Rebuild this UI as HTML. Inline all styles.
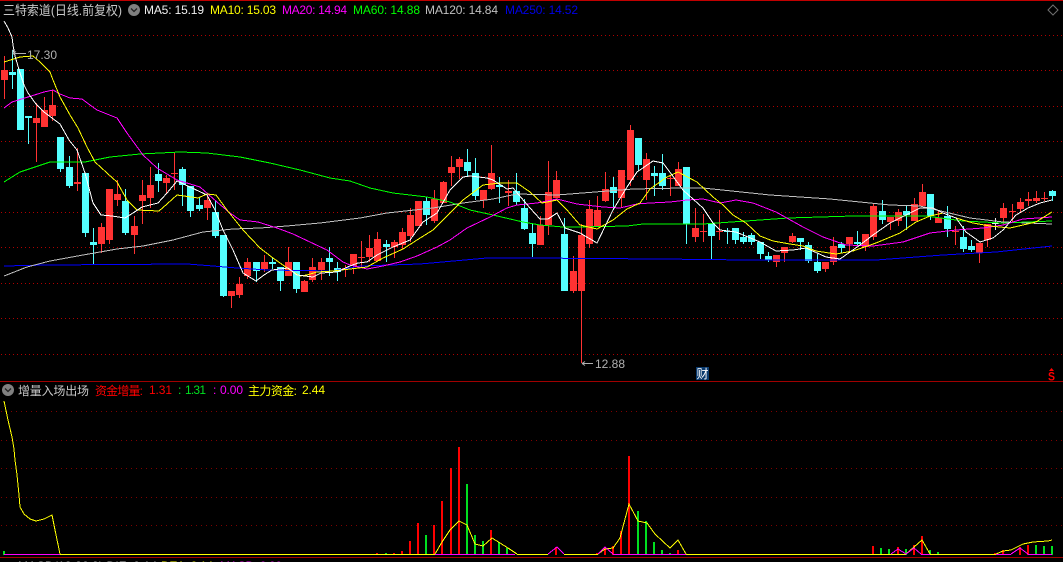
<!DOCTYPE html>
<html><head><meta charset="utf-8"><title>K</title>
<style>
html,body{margin:0;padding:0;background:#000;width:1063px;height:562px;overflow:hidden}
svg{display:block;position:absolute;left:0;top:0}
text{font-family:"Liberation Sans","Noto Sans CJK SC",sans-serif;font-size:12px}
.c{font-size:12px}
</style></head><body>
<svg width="1063" height="562" viewBox="0 0 1063 562" xmlns="http://www.w3.org/2000/svg">
<rect width="1063" height="562" fill="#000"/>
<g shape-rendering="crispEdges">
<rect x="0" y="0" width="1063" height="1" fill="#c00000"/>
<rect x="0" y="381" width="1063" height="1" fill="#a00000"/>
<rect x="0" y="557" width="1063" height="1" fill="#a00000"/>
<path fill="none" stroke="#b00000" stroke-dasharray="1 3" d="M1 35.5H1063M1 70.5H1063M1 106.5H1063M1 141.5H1063M1 176.5H1063M1 212.5H1063M1 247.5H1063M1 283.5H1063M1 318.5H1063M1 354.5H1063"/>
<path fill="none" stroke="#800000" stroke-dasharray="1 4" d="M1 411.5H1063M1 440.5H1063M1 468.5H1063M1 497.5H1063M1 525.5H1063"/>

<path fill="none" stroke="#ff3232" d="M4.5 56V99M36.5 103V162M44.5 97V127M52.5 90V121M77.5 148V191M101.5 223V253M109.5 189V244M117.5 180V206M134.5 216V254M142.5 180V224M150.5 167V208M166.5 175V193M174.5 152V190M207.5 195V220M231.5 291V308M239.5 277V298M247.5 258V279M264.5 255V272M288.5 247V276M304.5 280V292M312.5 258V282M321.5 258V280M345.5 265V277M353.5 254V274M361.5 241V268M369.5 235V262M377.5 232V261M394.5 240V258M402.5 228V249M410.5 208V242M418.5 201V226M434.5 190V223M443.5 181V203M451.5 156V186M459.5 157V179M483.5 190V208M491.5 145V190M508.5 180V206M540.5 216V245M548.5 161V235M556.5 171V198M573.5 256V293M581.5 224V363M589.5 200V248M597.5 196V226M605.5 172V202M621.5 170V208M630.5 125V186M646.5 153V200M670.5 175V196M678.5 162V186M695.5 208V242M703.5 214V242M719.5 210V240M776.5 255V267M784.5 247V262M792.5 233V243M825.5 262V272M833.5 237V265M849.5 237V251M865.5 234V251M873.5 204V240M890.5 217V230M898.5 209V226M914.5 198V221M922.5 184V206M938.5 210V223M955.5 226V245M979.5 243V263M987.5 224V247M1003.5 203V224M1012.5 204V222M1020.5 198V213M1028.5 192V206M1036.5 191V203M1044.5 192V201"/>
<path fill="#ff3232" d="M1 70h7v10h-7zM33 118h7v5h-7zM41 110h7v17h-7zM49 105h7v11h-7zM74 182h7v2h-7zM98 227h7v17h-7zM106 189h7v51h-7zM114 194h7v6h-7zM131 226h7v9h-7zM139 195h7v6h-7zM147 185h7v13h-7zM163 178h7v5h-7zM171 173h7v1h-7zM204 200h7v8h-7zM228 291h7v5h-7zM236 284h7v11h-7zM244 262h7v14h-7zM261 262h7v7h-7zM285 262h7v14h-7zM301 281h7v11h-7zM309 267h7v13h-7zM318 262h7v8h-7zM342 268h7v1h-7zM350 254h7v12h-7zM358 257h7v1h-7zM366 248h7v9h-7zM374 239h7v22h-7zM391 242h7v5h-7zM399 232h7v13h-7zM407 215h7v21h-7zM415 201h7v25h-7zM431 199h7v22h-7zM440 182h7v21h-7zM448 167h7v6h-7zM456 159h7v8h-7zM480 190h7v10h-7zM488 173h7v16h-7zM505 191h7v2h-7zM537 225h7v20h-7zM545 192h7v33h-7zM553 180h7v18h-7zM570 271h7v20h-7zM578 235h7v56h-7zM586 209h7v35h-7zM594 210h7v16h-7zM602 189h7v12h-7zM618 170h7v28h-7zM627 130h7v50h-7zM643 159h7v21h-7zM667 178h7v1h-7zM675 169h7v17h-7zM692 228h7v9h-7zM700 231h7v1h-7zM716 231h7v1h-7zM773 255h7v7h-7zM781 247h7v6h-7zM789 236h7v6h-7zM822 262h7v7h-7zM830 246h7v16h-7zM846 237h7v7h-7zM862 234h7v13h-7zM870 206h7v31h-7zM887 217h7v5h-7zM895 212h7v9h-7zM911 204h7v17h-7zM919 192h7v14h-7zM935 218h7v5h-7zM952 231h7v1h-7zM976 243h7v10h-7zM984 224h7v16h-7zM1000 208h7v10h-7zM1009 211h7v1h-7zM1017 202h7v7h-7zM1025 199h7v2h-7zM1033 198h7v3h-7zM1041 198h7v1h-7z"/>

<path fill="none" stroke="#54ffff" d="M12.5 50V89M28.5 116V144M60.5 137V172M69.5 156V188M85.5 173V237M93.5 228V264M125.5 189V235M158.5 163V192M182.5 167V206M190.5 186V217M199.5 198V211M215.5 201V238M223.5 235V297M256.5 262V282M272.5 258V269M280.5 267V291M296.5 262V293M329.5 247V276M337.5 262V281M386.5 240V262M426.5 197V225M467.5 149V177M475.5 158V200M499.5 177V203M516.5 173V205M524.5 199V230M532.5 224V257M564.5 218V291M613.5 177V210M638.5 138V171M654.5 166V196M662.5 154V190M686.5 167V244M711.5 223V259M727.5 228V244M735.5 228V244M743.5 232V244M751.5 233V245M760.5 242V259M768.5 252V262M800.5 238V250M808.5 242V263M817.5 254V273M841.5 242V253M857.5 231V246M882.5 200V224M906.5 205V230M930.5 194V220M947.5 206V237M963.5 226V252M971.5 240V252M1052.5 190V201"/>
<path fill="#54ffff" d="M9 72h7v3h-7zM17 69h7v61h-7zM25 116h7v2h-7zM57 137h7v32h-7zM66 167h7v19h-7zM82 173h7v60h-7zM90 242h7v3h-7zM122 201h7v32h-7zM155 174h7v7h-7zM179 169h7v16h-7zM187 186h7v25h-7zM196 205h7v4h-7zM212 212h7v24h-7zM220 235h7v61h-7zM253 262h7v9h-7zM269 262h7v2h-7zM277 267h7v14h-7zM293 262h7v27h-7zM326 258h7v4h-7zM334 268h7v4h-7zM383 244h7v3h-7zM423 201h7v14h-7zM464 162h7v9h-7zM472 173h7v23h-7zM496 185h7v2h-7zM513 191h7v11h-7zM521 208h7v21h-7zM529 233h7v11h-7zM561 234h7v57h-7zM610 187h7v6h-7zM635 138h7v27h-7zM651 173h7v3h-7zM659 173h7v13h-7zM683 167h7v57h-7zM708 223h7v13h-7zM724 231h7v1h-7zM732 228h7v12h-7zM740 237h7v5h-7zM748 235h7v7h-7zM757 242h7v12h-7zM765 256h7v4h-7zM797 238h7v4h-7zM805 245h7v16h-7zM814 262h7v9h-7zM838 244h7v4h-7zM854 242h7v2h-7zM879 211h7v9h-7zM903 211h7v4h-7zM927 194h7v22h-7zM944 216h7v13h-7zM960 237h7v12h-7zM968 246h7v4h-7zM1049 191h7v5h-7z"/>
<path fill="none" stroke="#e8e8e8" d="M995.5 218V230M992 223.5H999"/>

<g fill="none">
<polyline stroke="#0000ff" points="4,266 47,265 187,264 213,266 237,268 267,270 333,271 360,266 420,264 487,258 530,258 660,259 748,260 876,260 943,255 996,252 1052,246"/>
<polyline stroke="#c0c0c0" points="4,276 27,267 50,261 83,255 117,249 143,246 173,240 203,232 233,229 260,228 287,226 320,223 360,218 387,213 433,208 463,203 493,199 517,194 557,195 633,189 683,188 703,188 770,195 830,199 890,205 920,206 970,218 1003,222 1052,224"/>
<polyline stroke="#00ff00" points="4,182 20,172 35,167 50,162 85,162 110,157 140,154 180,152 207,153 240,157 270,163 300,170 330,178 350,181 370,188 393,193 427,197 450,202 470,210 493,215 523,222 540,225 563,227 580,227 627,226 643,224 703,224 746,221 788,218 853,216 926,216 963,221 1003,223 1052,221"/>
<polyline stroke="#ff00ff" points="4,108 12,102 28,97 44,92 53,90 60,94 70,98 82,99 90,105 97,110 117,118 127,133 143,155 157,168 177,180 200,187 217,202 230,213 240,220 258,222 277,228 293,234 310,242 327,250 343,262 350,265 367,269 383,266 400,262 417,256 437,247 450,240 467,228 490,217 507,208 517,205 537,203 557,199 577,204 603,207 620,208 637,204 650,203 670,202 687,200 703,199 720,203 736,200 753,203 776,212 803,227 823,237 846,245 873,246 903,242 930,233 956,230 983,228 1003,225 1023,219 1052,217"/>
<polyline stroke="#ffff00" points="4,62 20,57 33,56 40,62 50,72 53,80 60,97 70,115 78,128 87,147 95,162 107,173 117,182 127,200 137,210 159,211 167,204 177,195 198,198 207,194 216,195 227,210 243,230 260,248 273,258 290,270 300,276 307,275 317,272 333,271 350,269 367,267 383,258 403,249 417,240 433,230 450,213 463,200 483,185 500,183 517,183 530,192 542,203 557,200 567,210 580,225 597,229 613,220 627,209 640,203 650,189 667,177 678,172 697,182 713,197 723,205 733,215 746,223 760,236 773,241 790,244 803,246 816,251 836,254 853,251 876,243 900,233 916,222 930,216 943,213 956,218 973,223 990,226 1010,228 1023,225 1036,222 1052,212"/>
<polyline stroke="#ffffff" points="4,21 8,28 12,37 13,45 15,56 20,73 24,85 28,93 36,104 44,112 52,118 60,124 69,140 77,150 85,173 93,203 101,215 112,216 125,218 133,213 142,207 158,203 167,193 177,181 207,195 215,210 223,230 233,250 243,273 256,281 264,275 272,270 288,268 297,275 313,277 321,273 337,272 350,266 358,263 367,262 377,255 393,247 410,240 423,222 437,213 450,190 463,177 470,176 487,178 493,180 507,189 513,188 530,208 540,219 548,219 557,213 565,228 580,233 597,243 613,210 627,187 637,172 653,161 663,163 672,175 683,190 703,208 713,223 720,230 736,232 760,242 776,251 793,250 806,248 826,257 840,259 860,245 873,235 890,223 906,215 920,208 933,208 943,213 956,218 966,232 980,242 993,238 1003,230 1016,215 1028,208 1040,203 1052,200"/>
</g>

<path fill="none" stroke="#ff0000" stroke-width="2" d="M377 555V553M394 555V553M402 555V551M410 555V541M418 555V523M434 555V525M442 555V501M451 555V468M459 555V447M491 555V530M556 555V547M597 555V553M605 555V547M613 555V546M621 555V531M629 555V456M678 555V550M873 555V546M898 555V547M914 555V545M922 555V536M995 555V553M1003 555V550M1020 555V547M1028 555V545"/>
<path fill="none" stroke="#00e020" stroke-width="2" d="M4 555V551M386 555V553M426 555V535M467 555V484M475 555V535M483 555V541M499 555V542M507 555V548M638 555V511M646 555V521M654 555V542M662 555V550M670 555V553M881 555V548M889 555V549M906 555V549M930 555V550M938 555V552M1036 555V545M1044 555V546M1052 555V546"/>
<path fill="none" stroke="#ffff00" d="M60 554.5H435M517 554.5H548M564 554.5H598M686 554.5H906M930 554.5H996"/>
<polyline fill="none" stroke="#ffff00" points="4,401 8,420 12,437 14,449 15,460 17,475 19,495 20,507 24,514 30,519 36,521 44,519 52,515 55,530 60,554"/>
<polyline fill="none" stroke="#ffff00" points="435,554 442,542 450,530 459,521 467,525 475,544 483,546 492,538 500,543 508,548 517,554"/>
<polyline fill="none" stroke="#ffff00" points="548,554 557,547 564,554"/>
<polyline fill="none" stroke="#ffff00" points="598,554 605,549 613,548 620,538 629,504 638,521 647,523 655,534 670,548 678,540 686,554"/>
<polyline fill="none" stroke="#ffff00" points="906,554 922,540 930,554"/>
<polyline fill="none" stroke="#ffff00" points="996,554 1003,551 1011,550 1023,544 1033,542 1048,541 1052,540"/>
<path fill="none" stroke="#ff00ff" d="M4 554.5H60M435 554.5H515M613 554.5H686M921 554.5H930M996 554.5H1011M1028 554.5H1052"/>
<path fill="none" stroke="#ff00ff" d="M548 554L557 547L564 554M598 554L605 547L613 554M891 554L898 549L906 554L914 548L921 554M1011 554L1020 548L1028 554"/>

<path fill="#0a3a6e" d="M696 367h13v13h-13z"/>
</g>

<text x="3" y="15" fill="#c8c8c8" font-size="13" style="font-size:13px" textLength="119" lengthAdjust="spacingAndGlyphs">三特索道(日线.前复权)</text>
<circle cx="134" cy="10" r="6" fill="#808080"/>
<path d="M131 8.5l3 3 3-3" fill="none" stroke="#222" stroke-width="1.3"/>
<text x="144" y="14" fill="#f0f0f0" textLength="60">MA5: 15.19</text>
<text x="210" y="14" fill="#ffff00" textLength="66">MA10: 15.03</text>
<text x="282" y="14" fill="#ff00ff" textLength="65">MA20: 14.94</text>
<text x="353" y="14" fill="#00ff00" textLength="67">MA60: 14.88</text>
<text x="425" y="14" fill="#c0c0c0" textLength="73">MA120: 14.84</text>
<text x="505" y="14" fill="#0000e6" textLength="73">MA250: 14.52</text>

<path d="M1053 5l5 5-5 5-5-5z" fill="none" stroke="#707070"/>

<path d="M13 49.500V55M13 53.500H26M13 53.500l3-2" fill="none" stroke="#b0b0b0"/>
<text x="27" y="59" fill="#b0b0b0" textLength="30">17.30</text>
<path d="M582 363.500H593M582 363.500l3-2M582 363.500l3 2" fill="none" stroke="#b0b0b0"/>
<text x="595" y="368" fill="#b0b0b0" textLength="30">12.88</text>

<text x="696.500" y="378" fill="#fff" style="font-size:12px">财</text>
<path d="M1051.500 368l2.500 3h-5z" fill="#ff0000"/>
<text x="1048" y="380.500" fill="#ff0000" style="font-size:12px;font-weight:bold" textLength="7" lengthAdjust="spacingAndGlyphs">S</text>

<circle cx="8" cy="390" r="6" fill="#808080"/>
<path d="M5 388.500l3 3 3-3" fill="none" stroke="#222" stroke-width="1.3"/>
<text x="18" y="395" fill="#c8c8c8" style="font-size:12px" textLength="71">增量入场出场</text>
<text x="95" y="395" fill="#ff0000" style="font-size:12px" textLength="48">资金增量:</text>
<text x="149" y="394" fill="#ff0000" textLength="23">1.31</text>
<text x="178" y="394" fill="#00e020">:</text>
<text x="185" y="394" fill="#00e020" textLength="21">1.31</text>
<text x="213" y="394" fill="#ff00ff">:</text>
<text x="220" y="394" fill="#ff00ff" textLength="23">0.00</text>
<text x="248" y="395" fill="#ffff00" style="font-size:12px" textLength="49">主力资金:</text>
<text x="302" y="394" fill="#ffff00" textLength="23">2.44</text>

<circle cx="8" cy="568" r="6" fill="#808080"/>
<text x="18" y="570" fill="#c0c0c0" textLength="139">MACD(12,26,9) DIF: 0.14</text>
<text x="161" y="570" fill="#ffff00" textLength="52">DEA: 0.14</text>
<text x="220" y="570" fill="#ff00ff" textLength="62">MACD: 0.00</text>
</svg>
</body></html>
